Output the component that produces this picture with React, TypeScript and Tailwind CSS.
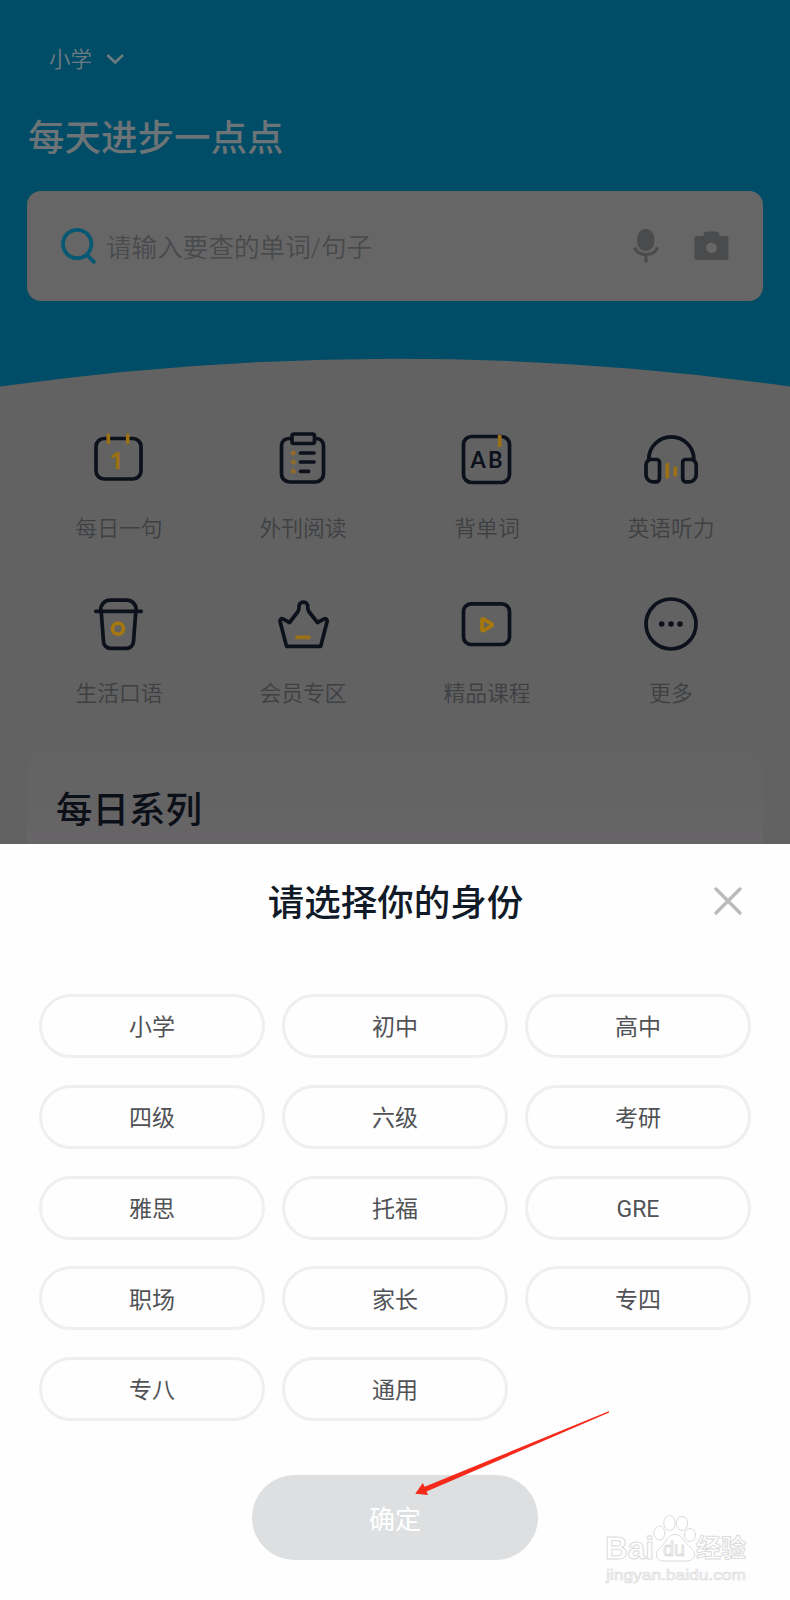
import type { ReactNode } from 'react'

interface Shortcut {
    label: string
    icon: ReactNode
}

const shortcuts: Shortcut[] = [
    {
        label: '每日一句',
        icon: (
            <>
                <rect x="9" y="12.5" width="45" height="40.5" rx="8" />
                <path className="stroke-[#9c7014]" d="M21.3 9.2v7M40.7 9.2v7" />
                <text x="22.5" y="43" className="fill-[#9c7014] stroke-none font-['Noto_Sans'] text-[24px] font-bold">1</text>
            </>
        ),
    },
    {
        label: '外刊阅读',
        icon: (
            <>
                <path d="M19 12.5h-1.5a7 7 0 0 0-7 7V48a8 8 0 0 0 8 8h26a8 8 0 0 0 8-8V19.5a7 7 0 0 0-7-7H45" />
                <rect x="21" y="8" width="22.5" height="9.5" rx="2" />
                <path d="M29.5 27H43M29.5 36H43M29.5 45.3H37.5" />
                <g className="fill-[#8f6a2c] stroke-none">
                    <circle cx="22.3" cy="27" r="2.5" />
                    <circle cx="22.3" cy="36" r="2.5" />
                    <circle cx="22.3" cy="45.3" r="2.5" />
                </g>
            </>
        ),
    },
    {
        label: '背单词',
        icon: (
            <>
                <rect x="8.5" y="10.5" width="46" height="46" rx="8" />
                <path className="stroke-[#9c7014]" strokeLinecap="butt" d="M44.7 9v12" />
                <text x="15.5" y="42" textLength="32" className="fill-[#0c111c] stroke-none font-[Lato] text-[22px] font-bold">AB</text>
            </>
        ),
    },
    {
        label: '英语听力',
        icon: (
            <>
                <path d="M9.7 33.5a22.6 22.6 0 0 1 45.2 0" strokeLinecap="butt" />
                <path d="M13 33.5h4.5a3 3 0 0 1 3 3v16a3.3 3.3 0 0 1-3.3 3.3H14a7 7 0 0 1-7-7V39a5.5 5.5 0 0 1 6-5.5z" />
                <path d="M51.2 33.5h-4.5a3 3 0 0 0-3 3v16a3.3 3.3 0 0 0 3.3 3.3h3.2a7 7 0 0 0 7-7V39a5.5 5.5 0 0 0-6-5.5z" />
                <path className="stroke-[#9c7014]" d="M28.3 38.5v12.5M36.3 42v7" />
            </>
        ),
    },
    {
        label: '生活口语',
        icon: (
            <>
                <path d="M13.7 19v-1.5a9.5 9.5 0 0 1 9.5-9.4h16.5a9.5 9.5 0 0 1 9.5 9.4V19M8.7 19.3h45.5" />
                <path d="M14.2 19.5l2.3 30a7 7 0 0 0 7 6.8h16a7 7 0 0 0 7-6.8l2.3-30" />
                <circle className="stroke-[#a5770f]" cx="31" cy="36.7" r="5.5" />
            </>
        ),
    },
    {
        label: '会员专区',
        icon: (
            <>
                <path d="M15.5 54.3L9.2 30c-.7-2.8 1-4 3-2.8l6.3 3.3L27 19.5q1-1.5 1-4a4.5 4.5 0 1 1 8.8 0q0 2.500 1 4l8.700 11 6.300-3.300c2-1.200 3.900 0 3.200 2.800L49.700 54.300z" />
                <path className="stroke-[#9c7014]" d="M25.8 45.3h12.2" />
            </>
        ),
    },
    {
        label: '精品课程',
        icon: (
            <>
                <rect x="8.5" y="11.9" width="46" height="40.6" rx="7.5" />
                <path className="stroke-[#a5770f]" d="M27 28v9.500q0 2 1.800 1l7.700-4.600q1.600-1 0-2l-7.700-4.700q-1.800-1-1.800.8z" />
            </>
        ),
    },
    {
        label: '更多',
        icon: (
            <>
                <circle cx="32" cy="32" r="25" />
                <g className="fill-[#0c111c] stroke-none">
                    <circle cx="22.7" cy="32" r="2.8" />
                    <circle cx="32" cy="32" r="2.8" />
                    <circle cx="41" cy="32" r="2.8" />
                </g>
            </>
        ),
    },
]

const identities = [
    '小学', '初中', '高中',
    '四级', '六级', '考研',
    '雅思', '托福', 'GRE',
    '职场', '家长', '专四',
    '专八', '通用',
]

function Header() {
    return (
        <header className="relative h-[388px] shrink-0 bg-[#014c66] px-[27px] pt-[42px]">
            <div className="flex h-9 items-center gap-[14px] pl-[22px]">
                <span className="pt-px text-[21.5px] font-[350] text-[#6f7d83]">小学</span>
                <svg className="h-5 w-[18px] fill-none stroke-[#6f7d83]" viewBox="0 0 18 20" strokeWidth="2.5">
                    <path d="M1.3 5l7.9 7.5L17 5" />
                </svg>
            </div>
            <h1 className="mt-[34px] ml-px text-[36.5px] leading-[54px] font-medium text-[#6c7477]">每天进步一点点</h1>
            <div className="mt-[25px] flex h-[110px] items-center rounded-[14px] bg-[#676667] pr-[34px] pl-[33px]">
                <svg className="h-10 w-10 fill-none stroke-[#075873]" viewBox="0 0 40 40" strokeWidth="3.8">
                    <circle cx="17.2" cy="18" r="14.2" />
                    <path d="M26.5 28.5l8.500 8.500" />
                </svg>
                <span className="ml-[6px] flex-1 pt-[4px] text-[25.6px] font-[350] text-[#484a4c]">请输入要查的单词/句子</span>
                <svg className="mr-[34px] h-9 w-7 fill-[#494b4d]" viewBox="0 0 28 36">
                    <rect x="5.3" y="1" width="17" height="22" rx="8.5" />
                    <path className="fill-none stroke-[#494b4d]" strokeWidth="3.2" d="M2.5 19.5c2 5 6.5 7 11.5 7s9.5-2 11.5-7M14 27v7.500" />
                </svg>
                <svg className="h-[30px] w-[35px] fill-[#494b4d]" viewBox="0 0 35 30">
                    <path fillRule="evenodd" d="M3 5h6.500V3Q10 .5 12.500 .5h10Q25 .5 25.500 3V5H32q2.500 0 2.500 2.500v19q0 2.500-2.500 2.500H3Q.5 29 .5 26.500V7.500Q.5 5 3 5zM17.500 11.500a5.300 5.300 0 1 0 0 10.600a5.300 5.300 0 0 0 0-10.600z" />
                </svg>
            </div>
            <svg className="absolute bottom-0 left-0 h-[30px] w-full fill-[#626262]" viewBox="0 0 790 30">
                <path d="M0 28.5Q197 .7 395 .7T790 28.5V30H0z" />
            </svg>
        </header>
    )
}

function ShortcutGrid() {
    return (
        <section className="grid shrink-0 grid-cols-4 px-[27px] pt-[38px]">
            {shortcuts.map((item) => (
                <div key={item.label} className="flex h-[165.5px] flex-col items-center">
                    <svg
                        className="h-16 w-16 fill-none stroke-[#0c111c]"
                        viewBox="0 0 64 64"
                        strokeWidth="3.7"
                        strokeLinecap="round"
                        strokeLinejoin="round"
                    >
                        {item.icon}
                    </svg>
                    <span className="mt-[22.5px] text-[21.8px] leading-8 font-[350] text-[#3e4042]">{item.label}</span>
                </div>
            ))}
        </section>
    )
}

function IdentitySheet() {
    return (
        <section className="relative h-[756px] bg-[#fefefe]">
            <div className="flex h-[116px] items-center justify-center">
                <h2 className="pt-[5px] pl-px text-[36.5px] font-medium text-[#111a27]">请选择你的身份</h2>
                <svg className="absolute top-[43px] right-[48px] h-7 w-7 stroke-[#b9baba]" viewBox="0 0 28 28" strokeWidth="3.3" strokeLinecap="round">
                    <path d="M2 2l24 24M26 2L2 26" />
                </svg>
            </div>
            <div className="mt-[34px] grid grid-cols-3 gap-x-[17px] gap-y-[26.8px] px-[39px]">
                {identities.map((name) => (
                    <button
                        key={name}
                        className="flex h-16 items-center justify-center rounded-full border-[3px] border-[#f0eff0] pt-[5px] text-[23px] text-[#505256]"
                    >
                        {name}
                    </button>
                ))}
            </div>
            <button className="mx-auto mt-[54px] flex h-[85px] w-[286px] items-center justify-center rounded-full bg-[#dddfe1] pt-[5px] text-[26px] text-white">
                确定
            </button>
            <svg className="absolute top-[560px] left-[410px] h-[96px] w-[204px] fill-[#f52a1b]" viewBox="410 1404 204 96">
                <path d="M415.3 1493.7L422.7 1483l2 3.7L608.7 1411.3l.5 1.2L426.5 1491.5l1.500 3.500z" />
            </svg>
            <Watermark />
        </section>
    )
}

function Watermark() {
    return (
        <svg className="absolute right-[40px] bottom-[10px] h-[80px] w-[150px] fill-white stroke-[#dcdcdc]" viewBox="600 1510 150 80" strokeWidth="1">
            <text x="605" y="1559" textLength="49" lengthAdjust="spacingAndGlyphs" className="font-['Liberation_Sans'] text-[31px] font-bold">Bai</text>
            <ellipse cx="659.5" cy="1533" rx="5.5" ry="7" />
            <ellipse cx="669.5" cy="1523" rx="5.7" ry="7.5" />
            <ellipse cx="682" cy="1523.5" rx="5.7" ry="7" />
            <ellipse cx="690" cy="1535" rx="5.5" ry="6.5" />
            <path d="M675 1534.5c6 0 8.5 5 12 9.5 4 4.5 8 6 7.5 11-.5 4.500-4 6-9 6h-21c-5 0-8-2-8-6.500 0-5 4-6 7-10 3.500-5 5.500-10 11.500-10z" />
            <text x="663" y="1556" textLength="22" lengthAdjust="spacingAndGlyphs" className="font-['Liberation_Sans'] text-[20px]">du</text>
            <text x="696" y="1557" textLength="50" className="text-[25px] font-bold">经验</text>
            <text x="606" y="1579.5" textLength="140" lengthAdjust="spacingAndGlyphs" strokeWidth="0.7" className="font-['Liberation_Sans'] text-[15px]">jingyan.baidu.com</text>
        </svg>
    )
}

export default function App() {
    return (
        <div className="h-[1600px] w-[790px] overflow-hidden bg-[#626262] font-[Roboto,'Noto_Sans_CJK_SC',sans-serif]">
            <div className="flex h-[844px] flex-col overflow-hidden">
                <Header />
                <ShortcutGrid />
                <div className="mx-[27px] -mt-[6px] h-[94px] shrink-0 rounded-t-[20px] bg-gradient-to-b from-[#636363] to-[#676567] pt-[33px] pl-[29px]">
                    <h2 className="text-[36.5px] leading-[54px] font-medium text-[#0b0f17]">每日系列</h2>
                </div>
            </div>
            <IdentitySheet />
        </div>
    )
}
